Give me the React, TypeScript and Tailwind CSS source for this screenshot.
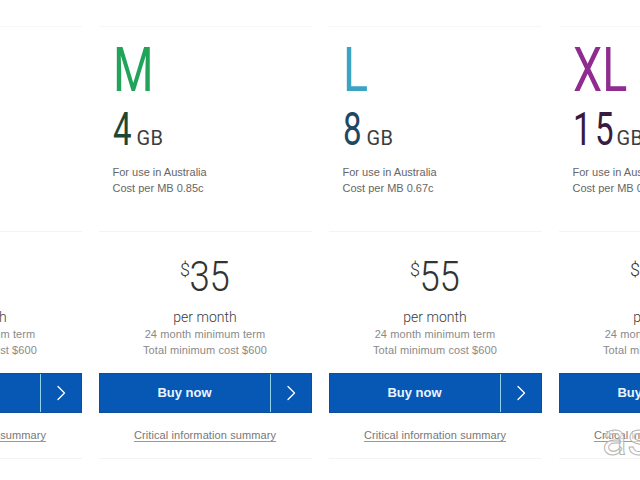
import React from "react";

type Plan = {
  size: string;
  sizeColor: string;
  gb: string;
  gbColor: string;
  cost: string;
  price: string;
};

const plans: Plan[] = [
  { size: "S", sizeColor: "text-[#e0672a]", gb: "2", gbColor: "text-[#5a2a10]", cost: "1.25c", price: "25" },
  { size: "M", sizeColor: "text-[#22a35a]", gb: "4", gbColor: "text-[#1d4634]", cost: "0.85c", price: "35" },
  { size: "L", sizeColor: "text-[#3ba3c4]", gb: "8", gbColor: "text-[#1d4763]", cost: "0.67c", price: "55" },
  { size: "XL", sizeColor: "text-[#8e2c8f]", gb: "15", gbColor: "text-[#3b1a3f]", cost: "0.57c", price: "100" },
];

function Chevron() {
  return (
    <svg width="10" height="16" viewBox="0 0 10 16" fill="none">
      <polyline points="2,1.5 8.5,8 2,14.5" stroke="#ffffff" strokeWidth="1.3" strokeLinecap="round" strokeLinejoin="round" />
    </svg>
  );
}

function Column({ p }: { p: Plan }) {
  return (
    <div className="flex-none w-[213px] mt-[26px] border-t border-[#f7f7f7]">
      <div className="pl-[14px] pt-[12px] pb-[35px] border-b border-[#f4f4f4]">
        <div className={`h-[62px] leading-[62px] text-[62px] font-[Roboto,sans-serif] ${p.sizeColor}`}>
          <span className="inline-block origin-left scale-x-[0.75]">{p.size}</span>
        </div>
        <div className="mt-[5px] flex items-baseline h-[46px] leading-[46px] font-[Roboto,sans-serif]">
          {p.gb.split("").map((d, i) => (
            <span key={i} className={`flex ${p.gb.length > 1 ? "w-[22px]" : "w-[24px]"} text-[46px] ${p.gbColor}`}>
              <span className="inline-block origin-left scale-x-[0.72]">{d}</span>
            </span>
          ))}
          <span className="text-[20px] text-[#3d3d3d] tracking-[0.5px]">GB</span>
        </div>
        <div className="mt-[12px] font-['Liberation_Sans',Arial,sans-serif] text-[11px] leading-[16px] text-[#666666]">
          <div>For use in Australia</div>
          <div>Cost per MB {p.cost}</div>
        </div>
      </div>
      <div className="pt-[24px] pb-[15px] border-b border-[#f4f4f4] flex flex-col items-center">
        <div className="flex items-start h-[42px] font-[Roboto,sans-serif] font-light text-[#333333]">
          <span className="mt-[5px] text-[18px] leading-[18px] w-[10px]">$</span>
          {p.price.split("").map((d, i) => (
            <span key={i} className="flex justify-center w-[20px] text-[42px] leading-[42px]">
              <span className="inline-block scale-x-[0.87]">{d}</span>
            </span>
          ))}
        </div>
        <div className="mt-[11px] font-[Roboto,sans-serif] font-light text-[14px] leading-[16px] text-[#3a3a3a]">
          per month
        </div>
        <div className="mt-[1px] font-['Liberation_Sans',Arial,sans-serif] text-[11px] leading-[16px] text-[#8a8a8a] text-center tracking-[0.1px]">
          <div>24 month minimum term</div>
          <div>Total minimum cost $600</div>
        </div>
        <div className="mt-[15px] w-full h-[40px] flex bg-[#0757b5] border border-[#0b4e9e]">
          <div className="flex-1 flex items-center justify-center font-['Liberation_Sans',Arial,sans-serif] text-[13px] font-bold text-[#eaf5ff]">
            Buy now
          </div>
          <div className="w-[1px] bg-[#93d3ea]" />
          <div className="w-[40px] flex items-center justify-center">
            <Chevron />
          </div>
        </div>
        <div className="mt-[14px] font-['Liberation_Sans',Arial,sans-serif] text-[11px] leading-[16px] text-[#777777] tracking-[0.1px] underline underline-offset-2 decoration-[#999999]">
          Critical information summary
        </div>
      </div>
    </div>
  );
}

export default function App() {
  return (
    <div className="relative w-[640px] h-[480px] overflow-hidden bg-white flex justify-center gap-[17px]">
      {plans.map((p) => (
        <Column key={p.size} p={p} />
      ))}
      <div className="absolute left-[602px] top-[416px] text-[46px] font-[Roboto,sans-serif] text-white/60 [-webkit-text-stroke:1px_#b5b5b5] leading-none">
        as
      </div>
    </div>
  );
}
